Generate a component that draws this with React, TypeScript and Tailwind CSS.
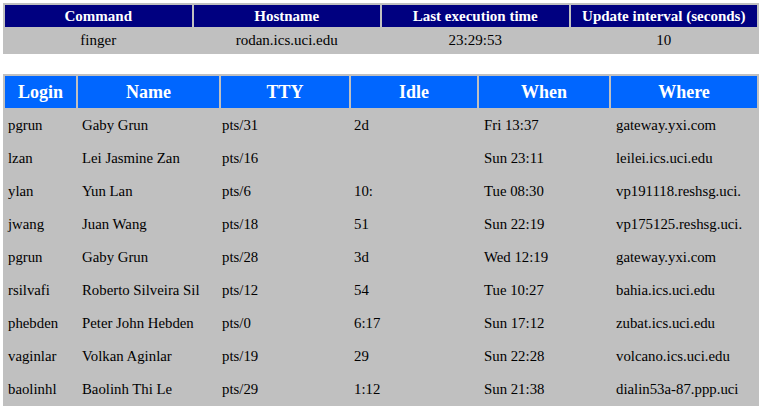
import React from "react";

const rows: string[][] = [
  ["pgrun", "Gaby Grun", "pts/31", "2d", "Fri 13:37", "gateway.yxi.com"],
  ["lzan", "Lei Jasmine Zan", "pts/16", "", "Sun 23:11", "leilei.ics.uci.edu"],
  ["ylan", "Yun Lan", "pts/6", "10:", "Tue 08:30", "vp191118.reshsg.uci."],
  ["jwang", "Juan Wang", "pts/18", "51", "Sun 22:19", "vp175125.reshsg.uci."],
  ["pgrun", "Gaby Grun", "pts/28", "3d", "Wed 12:19", "gateway.yxi.com"],
  ["rsilvafi", "Roberto Silveira Sil", "pts/12", "54", "Tue 10:27", "bahia.ics.uci.edu"],
  ["phebden", "Peter John Hebden", "pts/0", "6:17", "Sun 17:12", "zubat.ics.uci.edu"],
  ["vaginlar", "Volkan Aginlar", "pts/19", "29", "Sun 22:28", "volcano.ics.uci.edu"],
  ["baolinhl", "Baolinh Thi Le", "pts/29", "1:12", "Sun 21:38", "dialin53a-87.ppp.uci"],
];

const heads = ["Login", "Name", "TTY", "Idle", "When", "Where"];
const pads = ["pl-[3px]", "pl-[4px]", "pl-[1px]", "pl-[3px]", "pl-[5px]", "pl-[5px]"];

export default function App() {
  return (
    <div
      className="w-[761px] h-[406px] overflow-hidden bg-white"
      style={{ fontFamily: '"Liberation Serif", "Times New Roman", serif' }}
    >
      <div className="ml-[3px] mt-[3px] w-[756px] bg-[#c0c0c0] p-[2px] grid grid-cols-4 gap-[2px]">
        {["Command", "Hostname", "Last execution time", "Update interval (seconds)"].map((h) => (
          <div key={h} className="h-[22px] bg-[#000080] text-white font-bold text-[15px] flex items-center justify-center whitespace-nowrap">
            {h}
          </div>
        ))}
        {["finger", "rodan.ics.uci.edu", "23:29:53", "10"].map((d) => (
          <div key={d} className="h-[23px] text-black text-[15px] flex items-center justify-center">
            {d}
          </div>
        ))}
      </div>

      <div className="ml-[3px] mt-[20px] w-[756px] bg-[#c0c0c0] p-[2px] grid grid-cols-[71px_141px_128px_126px_130px_146px] gap-[2px]">
        {heads.map((h) => (
          <div key={h} className="h-[32px] bg-[#0066ff] text-white font-bold text-[18px] flex items-center justify-center">
            {h}
          </div>
        ))}
        {rows.map((r, i) =>
          r.map((c, j) => (
            <div
              key={i + "-" + j}
              className={"h-[31px] text-black text-[14.8px] flex items-center whitespace-nowrap " + pads[j]}
            >
              {c}
            </div>
          ))
        )}
      </div>
    </div>
  );
}
